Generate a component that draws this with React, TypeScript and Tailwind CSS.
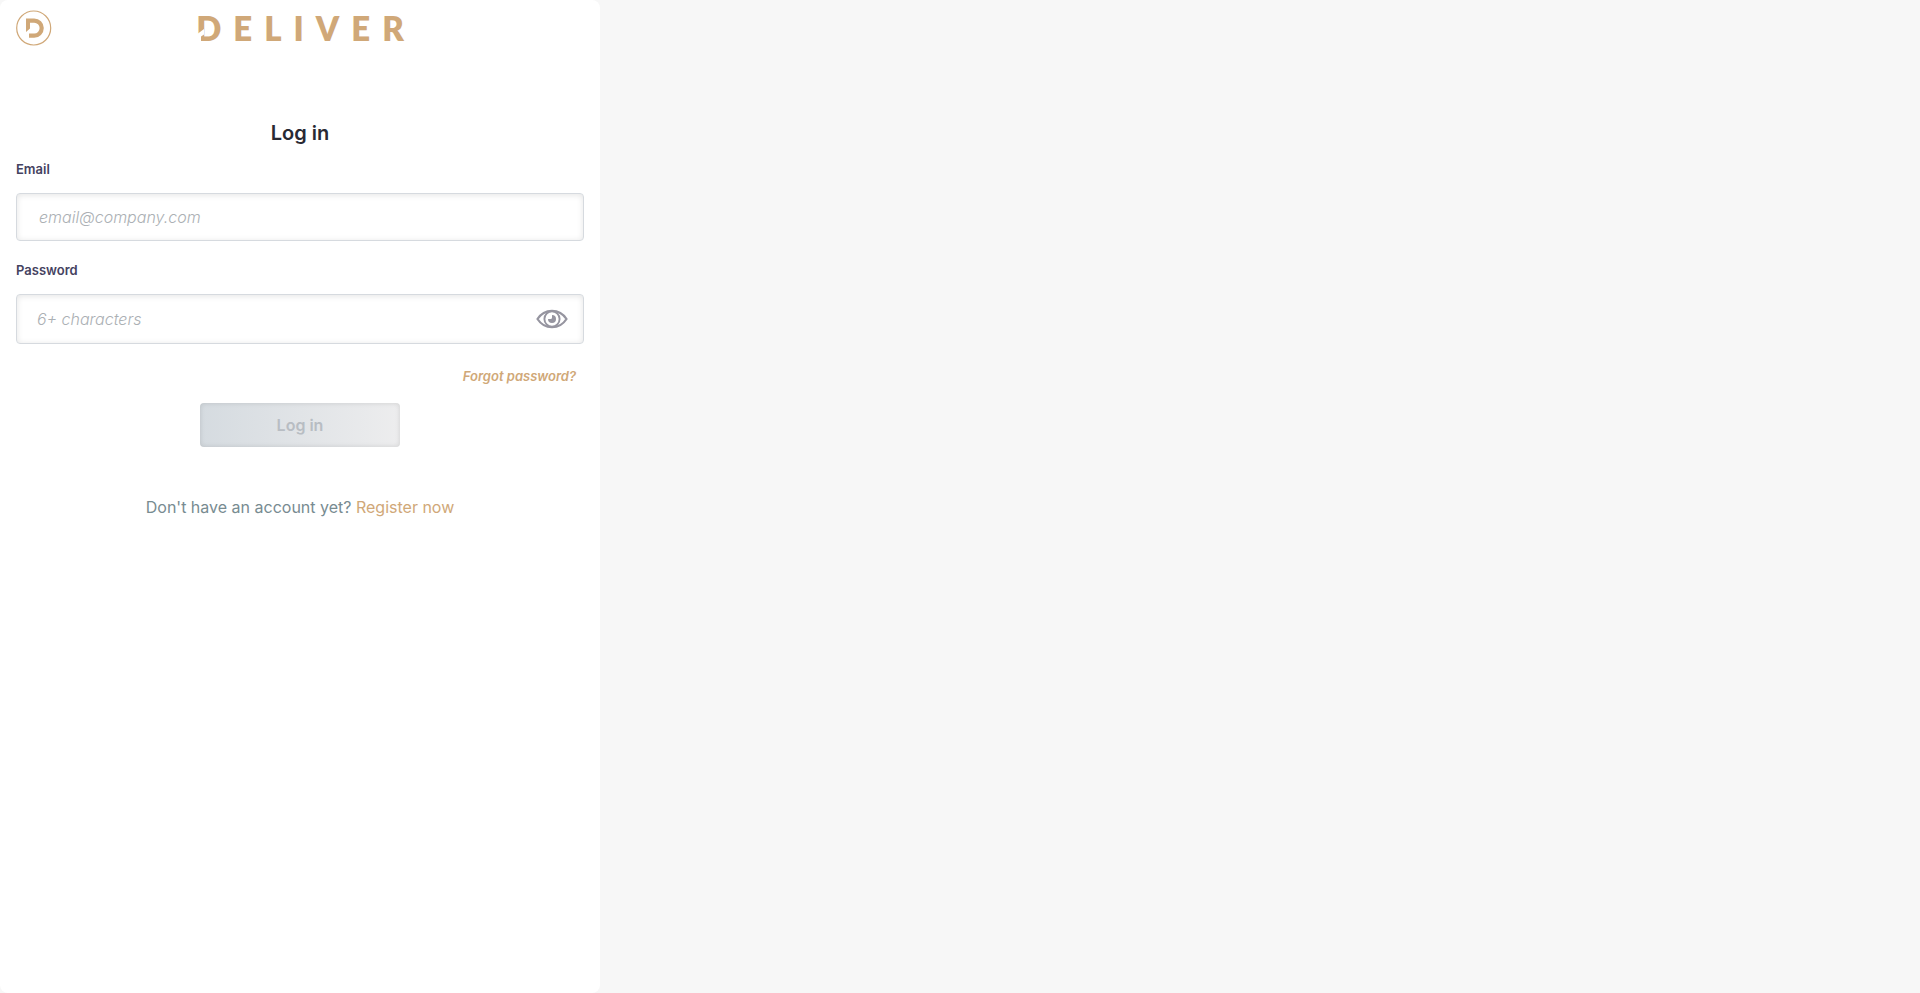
import { useState } from 'react';

function Emblem() {
  return (
    <svg viewBox="0 0 36 36" className="size-9" fill="none" aria-hidden="true">
      <circle cx="17.700" cy="18" r="17" stroke="#d0a878" strokeWidth="1.2" />
      <path d="M10 8.500h8.200a9.600 9.600 0 0 1 0 19.200H13v-4.200h5.200a5.400 5.400 0 0 0 0-10.800H14v5.800l-4 3.500z" fill="#d0a878" />
    </svg>
  );
}

function Wordmark() {
  return (
    <div className="relative flex text-[33px] leading-8 font-extrabold tracking-[12px] text-[#d0a878] font-['Lato',sans-serif]">
      <span className="-mr-[12px]">DELIVER</span>
      <svg viewBox="0 0 10 14" className="absolute top-[17px] left-0 h-[14px] w-[10px]" aria-hidden="true">
        <path d="M0 6 8 0v5.500L5 7.500V14H0z" fill="#fff" />
      </svg>
    </div>
  );
}

function EyeIcon() {
  return (
    <svg viewBox="0 0 32 20" className="h-5 w-8" fill="none" stroke="#9695a0" strokeWidth="2.2" aria-hidden="true">
      <path d="M1.500 10C5 4.500 10 1.800 16 1.800S27 4.500 30.500 10C27 15.500 22 18.200 16 18.200S5 15.500 1.500 10z" />
      <circle cx="16" cy="10" r="7.600" strokeWidth="1.900" />
      <path d="M16 6v2.500a1.500 1.500 0 0 1-1.500 1.500H12a4 4 0 1 0 4-4z" fill="#9695a0" stroke="none" />
    </svg>
  );
}

const field =
  'w-full rounded border border-[#d6dadf] bg-white text-base text-[#292933] shadow-[inset_0_1px_6px_rgba(0,0,0,0.11)] outline-none placeholder:font-light placeholder:italic placeholder:text-[#abb0b4] placeholder:opacity-100 focus:border-[#d0a878]';

export default function App() {
  const [email, setEmail] = useState('');
  const [password, setPassword] = useState('');
  const [visible, setVisible] = useState(false);

  return (
    <div className="min-h-screen bg-[#f7f7f7] font-['Inter',sans-serif]">
      <main className="min-h-screen w-full max-w-[600px] rounded-lg bg-white px-4">
        <header className="grid h-14 grid-cols-[1fr_auto_1fr] items-center">
          <a href="#" aria-label="Home" className="justify-self-start">
            <Emblem />
          </a>
          <Wordmark />
        </header>

        <h1 className="mt-[65px] text-center text-xl leading-6 font-semibold text-[#292933]">Log in</h1>

        <form className="mt-4 flex flex-col" onSubmit={(e) => e.preventDefault()}>
          <label htmlFor="email" className="text-[13px] leading-4 font-semibold text-[#45425f]">
            Email
          </label>
          <input
            id="email"
            type="email"
            placeholder="email@company.com"
            value={email}
            onChange={(e) => setEmail(e.target.value)}
            className={`${field} mt-4 h-12 px-[22px]`}
          />

          <label htmlFor="password" className="mt-[21px] text-[13px] leading-4 font-semibold text-[#45425f]">
            Password
          </label>
          <div className="relative mt-4">
            <input
              id="password"
              type={visible ? 'text' : 'password'}
              placeholder="6+ characters"
              value={password}
              onChange={(e) => setPassword(e.target.value)}
              className={`${field} h-[50px] pr-16 pl-5`}
            />
            <button
              type="button"
              aria-label="Show password"
              onClick={() => setVisible(!visible)}
              className="absolute inset-y-0 right-4 flex items-center"
            >
              <EyeIcon />
            </button>
          </div>

          <a href="#" className="mt-6 mr-2 self-end text-[13px] leading-4 font-semibold text-[#d0a878] italic">
            Forgot password?
          </a>

          <button
            type="submit"
            disabled={!email || !password}
            className="mt-[19px] h-11 w-[200px] self-center rounded bg-linear-to-r from-[#d5dbe0] to-[#ededee] text-base font-semibold text-[#b8bdc3] shadow-[inset_0_0_5px_rgba(0,0,0,0.13)]"
          >
            Log in
          </button>
        </form>

        <p className="mt-12 text-center text-base leading-6 text-[#788b91]">
          Don't have an account yet?{' '}
          <a href="#" className="text-[#d0a878]">
            Register now
          </a>
        </p>
      </main>
    </div>
  );
}
